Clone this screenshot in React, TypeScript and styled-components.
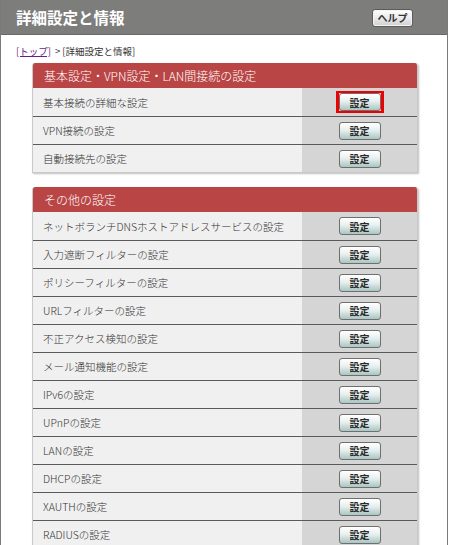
import styled, { createGlobalStyle } from 'styled-components'

const GlobalStyle = createGlobalStyle`
  html, body {
    margin: 0;
    padding: 0;
    background: #ffffff;
  }
  body {
    font-family: "Noto Sans CJK JP", "Liberation Sans", sans-serif;
    color: #333333;
  }
`

interface Section {
  title: string
  items: string[]
}

const sections: Section[] = [
  {
    title: '基本設定・VPN設定・LAN間接続の設定',
    items: ['基本接続の詳細な設定', 'VPN接続の設定', '自動接続先の設定'],
  },
  {
    title: 'その他の設定',
    items: [
      'ネットボランチDNSホストアドレスサービスの設定',
      '入力遮断フィルターの設定',
      'ポリシーフィルターの設定',
      'URLフィルターの設定',
      '不正アクセス検知の設定',
      'メール通知機能の設定',
      'IPv6の設定',
      'UPnPの設定',
      'LANの設定',
      'DHCPの設定',
      'XAUTHの設定',
      'RADIUSの設定',
    ],
  },
]

const Page = styled.div`
  width: 446px;
  min-height: 545px;
  border-left: 1px solid #7a7a7a;
  border-right: 1px solid #7a7a7a;
  background: #ffffff;
`

const TopBar = styled.header`
  height: 35px;
  box-sizing: border-box;
  background: #7d7d7c;
  border-bottom: 1px solid #6a6a6a;
  display: flex;
  align-items: center;
  justify-content: space-between;
  padding: 0 34px 0 15px;
`

const Title = styled.h1`
  margin: 0;
  font-size: 15.5px;
  font-weight: bold;
  color: #ffffff;
`

const HelpButton = styled.button`
  width: 41px;
  height: 18px;
  padding: 0;
  margin-top: 1px;
  font-family: inherit;
  font-size: 10px;
  font-weight: bold;
  color: #333333;
  background: linear-gradient(#ffffff, #e6e6e6 60%, #cfcfcf);
  border: 1px solid #5c5c5c;
  border-radius: 3px;
  box-shadow: inset 0 0 0 1px #f4f4f4;
`

const Breadcrumb = styled.nav`
  padding: 4px 15px 0;
  height: 24px;
  font-size: 9.5px;
  color: #333333;
  display: flex;
  align-items: center;
  gap: 4px;
`

const Crumb = styled.a`
  color: #6a1b8a;
  text-decoration: underline;
`

const Content = styled.main`
  padding: 0 29px 0 31px;
  display: flex;
  flex-direction: column;
  gap: 14px;
`

const Panel = styled.section`
  border: 1px solid #c9c9c9;
  border-top: none;
  border-radius: 3px 3px 0 0;
  box-shadow: 1px 1px 2px rgba(0, 0, 0, 0.25);
  overflow: hidden;
`

const PanelHeader = styled.h2`
  margin: 0;
  height: 25px;
  box-sizing: border-box;
  padding-left: 11px;
  display: flex;
  align-items: center;
  background: #b94545;
  color: #ffffff;
  font-size: 12px;
  font-weight: 300;
`

const Row = styled.div`
  display: grid;
  grid-template-columns: 269px 1fr;
  height: 28px;
  box-sizing: border-box;
  & + & {
    border-top: 1px solid #5a5a5a;
  }
`

const Label = styled.div`
  background: #f0f0f0;
  padding-left: 10px;
  display: flex;
  align-items: center;
  font-size: 10.5px;
  font-weight: 300;
  color: #333333;
  white-space: nowrap;
`

const Action = styled.div`
  background: #d5d5d5;
  display: flex;
  align-items: center;
  justify-content: center;
`

const Frame = styled.span<{ $highlighted?: boolean }>`
  display: inline-flex;
  padding: 0;
  border: 3px solid ${(p) => (p.$highlighted ? '#ee0000' : 'transparent')};
  border-top-width: 2px;
  border-bottom-width: 2px;
`

const SetButton = styled.button`
  width: 42px;
  height: 18px;
  padding: 0;
  font-family: inherit;
  font-size: 10px;
  font-weight: bold;
  color: #2a2a2a;
  background: linear-gradient(#ffffff, #e8f0ef 45%, #a9c6c2);
  border: 1px solid #6f6f6f;
  border-radius: 3px;
`

export default function App() {
  return (
    <>
      <GlobalStyle />
      <Page>
        <TopBar>
          <Title>詳細設定と情報</Title>
          <HelpButton>ヘルプ</HelpButton>
        </TopBar>
        <Breadcrumb>
          <Crumb>[トップ]</Crumb>
          <span>&gt; [詳細設定と情報]</span>
        </Breadcrumb>
        <Content>
          {sections.map((section, si) => (
            <Panel key={section.title}>
              <PanelHeader>{section.title}</PanelHeader>
              {section.items.map((item, i) => (
                <Row key={item}>
                  <Label>{item}</Label>
                  <Action>
                    <Frame $highlighted={si === 0 && i === 0}>
                      <SetButton>設定</SetButton>
                    </Frame>
                  </Action>
                </Row>
              ))}
            </Panel>
          ))}
        </Content>
      </Page>
    </>
  )
}
